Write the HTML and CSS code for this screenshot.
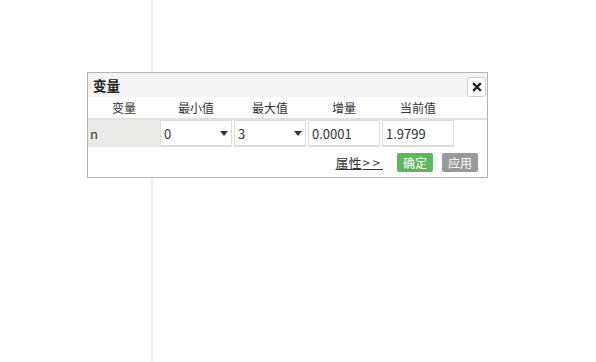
FILE: index.html
```html
<!DOCTYPE html>
<html>
<head>
<meta charset="utf-8">
<link rel="stylesheet" href="styles.css">
</head>
<body>
<div class="page">
  <div class="vline"></div>
  <div class="dialog">
    <div class="titlebar">
      <span class="title">变量</span>
      <span class="close"><svg width="10" height="10" viewBox="0 0 10 10"><path d="M2 2 L8 8 M8 2 L2 8" stroke="#222" stroke-width="2.4" stroke-linecap="square"/></svg></span>
    </div>
    <div class="row head">
      <div class="cell first">变量</div>
      <div class="cell">最小值</div>
      <div class="cell">最大值</div>
      <div class="cell">增量</div>
      <div class="cell">当前值</div>
    </div>
    <div class="row data">
      <div class="cell first name">n</div>
      <div class="cell box select"><span>0</span><span class="arrow"></span></div>
      <div class="cell box select"><span>3</span><span class="arrow"></span></div>
      <div class="cell box"><span>0.0001</span></div>
      <div class="cell box"><span>1.9799</span></div>
    </div>
    <div class="footer">
      <span class="link">属性<span class="gt">&gt;&gt;</span></span>
      <span class="btn ok">确定</span>
      <span class="btn apply">应用</span>
    </div>
  </div>
</div>
</body>
</html>
```
FILE: styles.css
```css
html, body {
  margin: 0;
  padding: 0;
  background: #fff;
}
.page {
  position: relative;
  width: 596px;
  height: 362px;
  overflow: hidden;
  font-family: "Noto Sans CJK SC", "Noto Sans", sans-serif;
  color: #333;
}
.vline {
  margin-left: 151px;
  width: 2px;
  height: 362px;
  background: #ececec;
}
.dialog {
  position: absolute;
  left: 87px;
  top: 72px;
  width: 399px;
  height: 104px;
  border: 1px solid #b4b4b4;
  background: #fff;
}
.titlebar {
  height: 24px;
  background: #f4f4f4;
  display: flex;
  align-items: center;
  justify-content: space-between;
  padding: 0 1px 0 5px;
}
.title {
  font-size: 13.5px;
  font-weight: bold;
  color: #222;
  line-height: 24px;
}
.close {
  width: 17px;
  height: 18px;
  margin-top: 4px;
  border: 1px solid #cfcfcf;
  border-radius: 3px;
  background: #fff;
  display: flex;
  align-items: center;
  justify-content: center;
}
.row {
  display: flex;
}
.head {
  height: 21px;
  align-items: center;
  font-size: 12px;
}
.head .cell {
  width: 72px;
  margin-right: 2px;
  text-align: center;
  line-height: 21px;
}
.head .cell.first {
  margin-right: 0;
}
.data {
  border-top: 2px solid #e0e0e0;
  height: 28px;
  font-size: 13px;
}
.data .cell {
  width: 72px;
  margin-right: 2px;
  box-sizing: border-box;
  display: flex;
  align-items: center;
}
.data .cell.first {
  margin-right: 0;
}
.name {
  background: #e9e9e5;
  padding-left: 2px;
  height: 27px;
  font-weight: normal;
  color: #333;
}
.box {
  height: 27px;
  border: 1px solid #dcdcdc;
  border-bottom-width: 2px;
  padding-left: 3px;
  justify-content: space-between;
  background: #fff;
}
.arrow {
  width: 0;
  height: 0;
  border-left: 4px solid transparent;
  border-right: 4px solid transparent;
  border-top: 5px solid #333;
  margin-right: 3px;
}
.footer {
  display: flex;
  align-items: center;
  justify-content: flex-end;
  height: 29px;
  padding-right: 9px;
}
.link {
  font-size: 13px;
  text-decoration: underline;
  color: #333;
  margin-right: 14px;
}
.gt {
  letter-spacing: 3px;
  margin-left: 1px;
}
.btn {
  display: inline-block;
  width: 36px;
  height: 19px;
  line-height: 19px;
  border-radius: 2px;
  font-size: 12px;
  color: #fff;
  text-align: center;
}
.ok {
  background: #5cb85c;
  margin-right: 9px;
}
.apply {
  background: #999;
}
```
